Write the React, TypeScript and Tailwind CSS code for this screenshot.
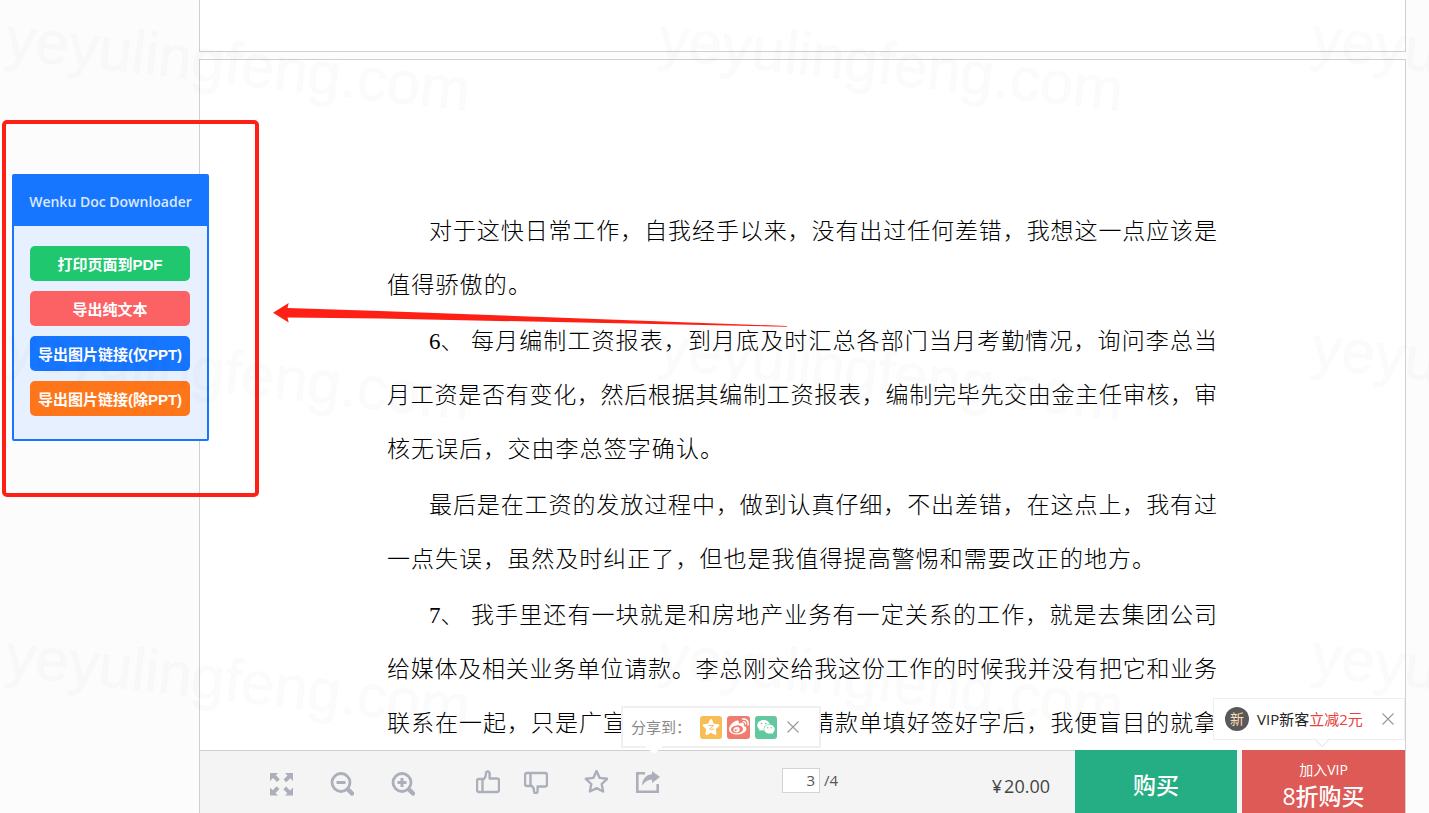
import React from 'react'
import clsx from 'clsx'
import { FaStar, FaWeibo } from 'react-icons/fa'
import { AiFillWechat } from 'react-icons/ai'

type Line = {
  text: string
  indent?: boolean
  marker?: string
  width?: string
  tail?: string
}

const paragraphs: Line[][] = [
  [
    { text: '对于这快日常工作，自我经手以来，没有出过任何差错，我想这一点应该是', indent: true },
    { text: '值得骄傲的。', width: 'w-[144px]' },
  ],
  [
    { text: '每月编制工资报表，到月底及时汇总各部门当月考勤情况，询问李总当', indent: true, marker: '6、' },
    { text: '月工资是否有变化，然后根据其编制工资报表，编制完毕先交由金主任审核，审' },
    { text: '核无误后，交由李总签字确认。', width: 'w-[336px]' },
  ],
  [
    { text: '最后是在工资的发放过程中，做到认真仔细，不出差错，在这点上，我有过', indent: true },
    { text: '一点失误，虽然及时纠正了，但也是我值得提高警惕和需要改正的地方。', width: 'w-[768px]' },
  ],
  [
    { text: '我手里还有一块就是和房地产业务有一定关系的工作，就是去集团公司', indent: true, marker: '7、' },
    { text: '给媒体及相关业务单位请款。李总刚交给我这份工作的时候我并没有把它和业务' },
    { text: '联系在一起，只是广宣', width: 'w-[239px]', tail: '请款单填好签好字后，我便盲目的就拿' },
  ],
]

const exportButtons = [
  { label: '打印页面到PDF', color: 'bg-[#1fc76f]' },
  { label: '导出纯文本', color: 'bg-[#fc6164]' },
  { label: '导出图片链接(仅PPT)', color: 'bg-[#1776ff]' },
  { label: '导出图片链接(除PPT)', color: 'bg-[#ff761a]' },
]

function JustifiedText({ className, children }: { className: string; children: React.ReactNode }) {
  return (
    <span className={clsx('block whitespace-nowrap text-justify [text-align-last:justify]', className)}>{children}</span>
  )
}

function DocumentPage() {
  return (
    <article className="flex-1 border border-b-0 border-[#d0d0d0] bg-white pt-[145px] pl-[187px] pr-[188px]">
      <div className="flex flex-col gap-0.5 font-['Liberation_Serif','Noto_Sans_CJK_SC',serif] text-[23px] font-light leading-[54px] text-black">
        {paragraphs.map((lines, i) => (
          <p key={i}>
            {lines.map((line) => (
              <span key={line.text} className={clsx('flex', line.indent && 'pl-[42px]')}>
                {line.marker && <span className="w-[42px] shrink-0">{line.marker}</span>}
                <JustifiedText className={line.width || 'flex-1'}>{line.text}</JustifiedText>
                {line.tail && <JustifiedText className="ml-auto w-[406px]">{line.tail}</JustifiedText>}
              </span>
            ))}
          </p>
        ))}
      </div>
    </article>
  )
}

function DownloaderPanel() {
  return (
    <aside className="absolute left-3 top-[174px] w-[197px] rounded-xs border-2 border-[#1776ff] bg-[#e6f0ff]">
      <h2 className="flex h-[50px] items-center justify-center whitespace-nowrap bg-[#1776ff] pt-0.5 font-['Open_Sans',sans-serif] text-sm font-semibold text-[#dbe8ff]">
        Wenku Doc Downloader
      </h2>
      <div className="flex flex-col gap-2.5 pl-4 pr-[17px] pt-5 pb-[23px]">
        {exportButtons.map((button) => (
          <button
            key={button.label}
            className={clsx(
              "h-[35px] whitespace-nowrap rounded-[5px] pt-[3px] font-['Liberation_Sans','Noto_Sans_CJK_SC',sans-serif] text-[15px] font-bold text-white",
              button.color
            )}
          >
            {button.label}
          </button>
        ))}
      </div>
    </aside>
  )
}

function IconButton({ label, className, children }: { label: string; className?: string; children: React.ReactNode }) {
  return (
    <button aria-label={label} className={clsx('h-6 w-6 shrink-0 text-[#abafba]', className)}>
      <svg viewBox="0 0 24 24" className="h-6 w-6" fill="none" stroke="currentColor" strokeWidth="2.4">
        {children}
      </svg>
    </button>
  )
}

function CloseButton() {
  return (
    <button aria-label="关闭" className="text-[#999]">
      <svg viewBox="0 0 12 12" className="h-3 w-3" stroke="currentColor" strokeWidth="1.1">
        <path d="M.5.5l11 11M11.5.5l-11 11" />
      </svg>
    </button>
  )
}

function SharePopup() {
  return (
    <div className="absolute -left-[15px] bottom-[46px] flex h-[42px] w-[200px] items-center border-2 border-[#f0f0f0] bg-white pl-2 text-[15px] text-[#888]">
      <span className="w-[69px] whitespace-nowrap">分享到：</span>
      <a href="#qzone" aria-label="QQ空间" className="relative flex h-[23px] w-[22px] items-center justify-center rounded-[3px] bg-[#f8bd54] text-white">
        <FaStar size={18} />
        <svg viewBox="0 0 18 18" className="absolute h-[18px] w-[18px]" fill="none" stroke="#f8bd54">
          <path d="M6.500 7.500h5L7.500 11c1.500.5 3 .5 4.500 0" />
        </svg>
      </a>
      <a href="#weibo" aria-label="新浪微博" className="ml-[5px] flex h-[23px] w-[23px] items-center justify-center rounded-[3px] bg-[#f07c70] text-white">
        <FaWeibo size={20} />
      </a>
      <a href="#wechat" aria-label="微信" className="ml-[5px] mr-2.5 flex h-[23px] w-[22px] items-center justify-center rounded-[3px] bg-[#62c89d] text-white">
        <AiFillWechat size={20} />
      </a>
      <CloseButton />
      <svg viewBox="0 0 18 8" className="absolute left-[22px] top-[38px] h-2 w-[18px]" fill="#fff">
        <path d="M0 0h18l-9 8z" />
      </svg>
    </div>
  )
}

function VipPopup() {
  return (
    <div className="absolute bottom-[73px] right-0 flex h-[42px] w-48 items-center border border-[#eee] bg-white pl-[11px] text-[15px] text-[#222]">
      <span className="mr-2 flex h-6 w-6 items-center justify-center rounded-full bg-[#595959] text-sm text-[#fbdcb8]">新</span>
      <span className="whitespace-nowrap">
        VIP新客<span className="text-[#e8413d]">立减2元</span>
      </span>
      <span className="ml-auto mr-2.5 flex">
        <CloseButton />
      </span>
      <svg viewBox="0 0 16 9" className="absolute left-[100px] top-10 h-[9px] w-4" fill="#fff" stroke="#ddd">
        <path d="M1 .5l7 7 7-7" />
      </svg>
    </div>
  )
}

function Toolbar() {
  return (
    <footer className="relative ml-[199px] mr-[23px] flex h-[63px] shrink-0 border-r border-[#d0d0d0] bg-[#f4f4f4] font-['Open_Sans','Noto_Sans_CJK_SC',sans-serif]">
      <div className="flex flex-1 items-center border-l border-t border-[#d0d0d0] pl-[69px] pr-[25px]">
        <IconButton label="全屏" className="mt-1">
          <g fill="currentColor" stroke="none">
            <path d="M1 1h8L6.800 3.300l4 4-2.800 2.800-4-4L1 9z" />
            <path d="M24 1v8l-2.700-2.700-4 4-2.800-2.800 4-4L16 1z" />
            <path d="M1 23.500v-8l2.700 2.700 4-4 2.800 2.800-4 4L9 23.500z" />
            <path d="M24 23.500h-8l2.300-2.300-4-4 2.800-2.800 4 4 2.900-2.900z" />
          </g>
        </IconButton>
        <IconButton label="缩小" className="ml-[37px] mt-1">
          <circle cx="11" cy="10.500" r="9" strokeWidth="2.800" />
          <path d="M6.500 10.500h9M17.500 17l5 5" strokeWidth="3" />
          <path d="M18.500 18l3.500 3.500" strokeWidth="4.500" strokeLinecap="round" />
        </IconButton>
        <IconButton label="放大" className="ml-[37px] mt-1">
          <circle cx="11" cy="10.500" r="9" strokeWidth="2.800" />
          <path d="M6.500 10.500h9M11 6v9M17.500 17l5 5" strokeWidth="3" />
          <path d="M18.500 18l3.500 3.500" strokeWidth="4.500" strokeLinecap="round" />
        </IconButton>
        <IconButton label="赞" className="ml-[61px]">
          <path
            strokeLinejoin="round"
            d="M6.500 9v13M3 9h5c1.500-1.400 2-2.800 2-5.500 0-1.300.6-2.100 1.700-2.100s1.900.8 1.900 2.400V8.500H21c1 0 2 .8 2 2V20c0 1.200-1 2-2 2H3c-1.200 0-2-.8-2-2v-9c0-1.200.8-2 2-2z"
          />
        </IconButton>
        <IconButton label="踩" className="ml-6">
          <path
            strokeLinejoin="round"
            d="M6.500 16V3M3 16h5c1.500 1.400 2 2.800 2 5 0 1.300.6 2.100 1.700 2.100s1.900-.8 1.900-2.400V16.500H21c1 0 2-.8 2-2V5c0-1.200-1-2-2-2H3c-1.200 0-2 .8-2 2v9c0 1.200.8 2 2 2z"
          />
        </IconButton>
        <IconButton label="收藏" className="ml-9">
          <path
            strokeLinejoin="round"
            d="M12.500 1l3.200 6.900 7.500.9-5.500 5.200 1.400 7.500-6.600-3.400L5.900 21.500 7.300 14 1.800 8.800l7.500-.9z"
          />
        </IconButton>
        <div className="relative ml-7 flex">
          <IconButton label="分享">
            <path strokeWidth="2.600" d="M9 3.300H1.300v18.400h20.400V14" />
            <path fill="currentColor" stroke="none" d="M16 1l8 6-8 6V9.500c-4 0-7 2-10 6C6.500 9 10 4.500 16 4.200z" />
          </IconButton>
          <SharePopup />
        </div>
        <label className="ml-[122px] flex items-center gap-1 pb-1 text-[15px] text-[#555]">
          <input
            type="text"
            defaultValue="3"
            aria-label="页码"
            className="h-[25px] w-[38px] border border-[#d4d4d4] bg-white pr-1 text-right"
          />
          /4
        </label>
        <span className="ml-auto flex items-center gap-0.5 whitespace-nowrap pt-2 text-lg text-[#444]">
          <span>¥</span>
          <span>20.00</span>
        </span>
      </div>
      <button className="w-[162px] bg-[#25ae84] pt-2 text-[23px] font-medium text-white">购买</button>
      <div className="relative ml-[5px] flex w-[163px]">
        <button className="flex flex-1 flex-col items-center bg-[#dd5a56] pt-2 text-white">
          <span className="text-sm leading-6">加入VIP</span>
          <span className="text-[23px] font-medium leading-7">8折购买</span>
        </button>
        <VipPopup />
      </div>
    </footer>
  )
}

function Watermark() {
  const rows = [58, 367, 675]
  const columns = [4, 657, 1310]

  return (
    <svg aria-hidden="true" className="pointer-events-none absolute inset-0 h-full w-full">
      {rows.map((y) =>
        columns.map((x) => (
          <text
            key={`${x}-${y}`}
            transform={`translate(${x} ${y}) rotate(6.500)`}
            className="fill-black/[0.016] stroke-black/[0.008] stroke-2 font-['Liberation_Sans',sans-serif] text-[60px]"
          >
            yeyulingfeng.com
          </text>
        ))
      )}
    </svg>
  )
}

export default function App() {
  return (
    <div className="relative flex h-screen flex-col overflow-hidden bg-[#fcfcfc] font-['Open_Sans','Noto_Sans_CJK_SC',sans-serif]">
      <main className="ml-[199px] mr-[23px] flex min-h-0 flex-1 flex-col gap-[7px] overflow-hidden">
        <div className="h-[52px] shrink-0 border border-t-0 border-[#d0d0d0] bg-white" />
        <DocumentPage />
      </main>
      <Toolbar />
      <DownloaderPanel />
      <Watermark />

      {/* callout box and arrow */}
      <div className="pointer-events-none absolute left-0.5 top-[120px] h-[377px] w-[257px] rounded-[5px] border-4 border-[#ff2015]" />
      <svg viewBox="0 0 514 24" className="pointer-events-none absolute left-[273px] top-[303px] h-6 w-[514px]" fill="#ff2015">
        <path d="M0 9.700L15.700 0l-1.200 5L107 8l407 15v.8L107 15.500 14.500 14.500l1.200 5z" />
      </svg>
    </div>
  )
}
